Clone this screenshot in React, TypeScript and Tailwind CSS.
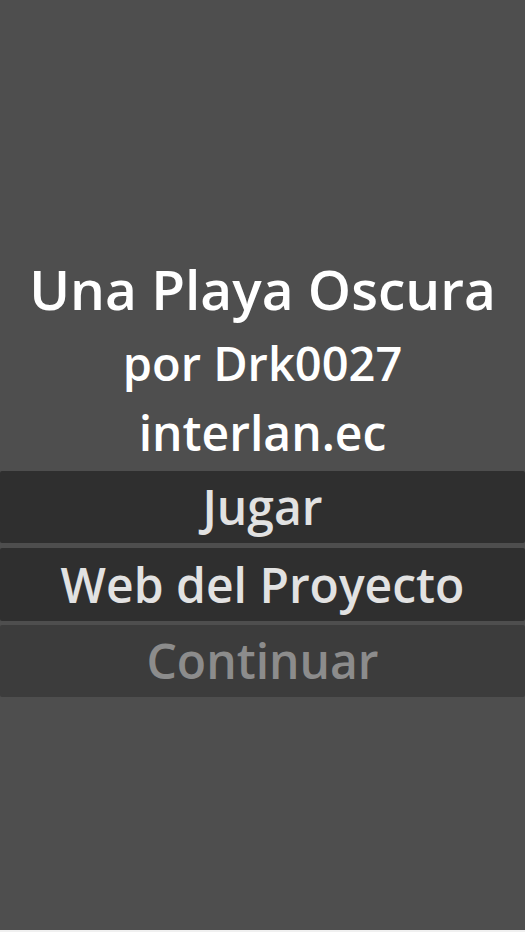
export default function App() {
  return (
    <div className="w-[525px] h-[932px] bg-[#f0f0f0]" style={{ fontFamily: '"Open Sans", sans-serif' }}>
      <div className="h-[930px] bg-[#4e4e4e] flex flex-col pt-[253px] font-semibold">
        <div className="text-center text-white text-[55px] leading-[72px]">Una Playa Oscura</div>
        <div className="text-center text-white text-[47px] leading-[76px]">por Drk0027</div>
        <div className="text-center text-white text-[48px] leading-[63px]">interlan.ec</div>
        <div className="flex flex-col mt-[7px]">
          <button className="h-[72px] bg-[#2f2f2f] rounded-[2px] text-[#e2e2e2] text-[48px] leading-[72px] text-center font-semibold">Jugar</button>
          <button className="mt-[5px] h-[73px] bg-[#2f2f2f] rounded-[2px] text-[#e2e2e2] text-[48px] leading-[73px] text-center font-semibold">Web del Proyecto</button>
          <button className="mt-[4px] h-[72px] bg-[#3c3c3c] rounded-[2px] text-[#8c8c8c] text-[48px] leading-[72px] text-center font-semibold">Continuar</button>
        </div>
      </div>
    </div>
  );
}
